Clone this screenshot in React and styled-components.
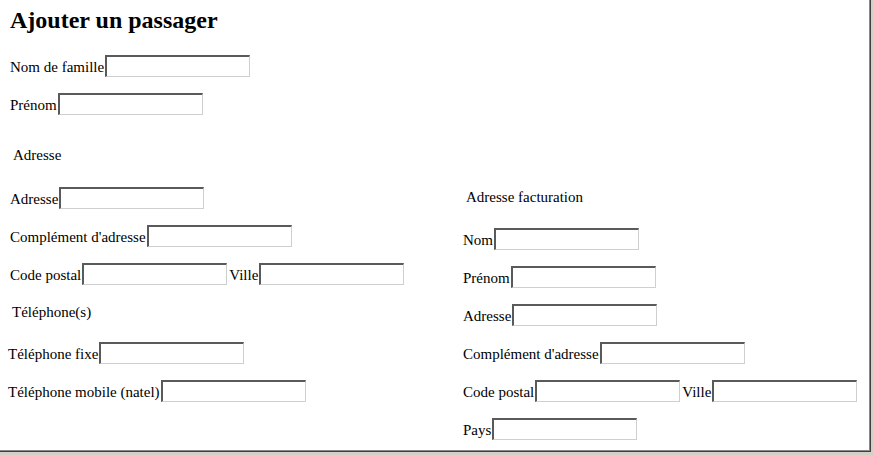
import React from "react";
import styled, { createGlobalStyle } from "styled-components";

const GlobalStyle = createGlobalStyle`
  html, body {
    margin: 0;
    padding: 0;
    background: #d4d0c8;
  }
  body {
    font-family: "Liberation Serif", "Times New Roman", serif;
    font-size: 15px;
    color: #000;
  }
`;

const Frame = styled.div`
  width: 873px;
  height: 455px;
  box-sizing: border-box;
  border-right: 2px solid #d4d0c8;
  border-bottom: 3px solid #d4d0c8;
  background: #d4d0c8;
`;

const FrameInner = styled.div`
  height: 100%;
  box-sizing: border-box;
  border-right: 1px solid #404040;
  border-bottom: 1px solid #404040;
`;

const Content = styled.div`
  height: 100%;
  box-sizing: border-box;
  border-right: 1px solid #8a8a8a;
  border-bottom: 1px solid #8a8a8a;
  background: #fff;
  overflow: hidden;
`;

const Title = styled.h1`
  margin: 6px 0 0 10px;
  height: 28px;
  line-height: 28px;
  font-size: 24px;
  font-weight: bold;
`;

const Row = styled.div`
  display: flex;
  align-items: center;
  height: 22px;
  margin-top: ${(p) => p.$top || 16}px;
  padding-left: ${(p) => p.$left || 10}px;
  white-space: nowrap;
`;

const Label = styled.span`
  line-height: 22px;
  padding-top: 1px;
  margin-left: ${(p) => p.$gap || 0}px;
  margin-right: 1px;
`;

const Input = styled.input`
  width: 145px;
  height: 22px;
  box-sizing: border-box;
  margin: 0;
  padding: 0;
  background: #fff;
  border-style: solid;
  border-width: 2px 1px 1px 2px;
  border-color: #5a5a5a #cfcfcf #cfcfcf #5a5a5a;
  font: inherit;
  outline: none;
`;

const Heading = styled.div`
  height: 20px;
  line-height: 20px;
  margin-top: ${(p) => p.$top || 0}px;
  padding-left: ${(p) => p.$left || 12}px;
`;

const Columns = styled.div`
  display: flex;
  margin-top: 30px;
`;

const Column = styled.div`
  width: ${(p) => p.$width}px;
  padding-top: ${(p) => p.$top || 0}px;
`;

const Field = ({ label, top, left }) => (
  <Row $top={top} $left={left}>
    <Label>{label}</Label>
    <Input type="text" />
  </Row>
);

const CityRow = ({ top, left }) => (
  <Row $top={top} $left={left}>
    <Label>Code postal</Label>
    <Input type="text" />
    <Label $gap={2}>Ville</Label>
    <Input type="text" />
  </Row>
);

export default function App() {
  return (
    <>
      <GlobalStyle />
      <Frame>
        <FrameInner>
          <Content>
            <Title>Ajouter un passager</Title>
            <Field label="Nom de famille" top={21} />
            <Field label="Prénom" top={16} />
            <Columns>
              <Column $width={453}>
                <Heading $left={13}>Adresse</Heading>
                <Field label="Adresse" top={22} />
                <Field label="Complément d'adresse" />
                <CityRow />
                <Heading $top={17}>Téléphone(s)</Heading>
                <Field label="Téléphone fixe" top={20} left={8} />
                <Field label="Téléphone mobile (natel)" left={8} />
              </Column>
              <Column $width={410} $top={42}>
                <Heading $left={13}>Adresse facturation</Heading>
                <Field label="Nom" top={21} />
                <Field label="Prénom" />
                <Field label="Adresse" />
                <Field label="Complément d'adresse" />
                <CityRow />
                <Field label="Pays" />
              </Column>
            </Columns>
          </Content>
        </FrameInner>
      </Frame>
    </>
  );
}
